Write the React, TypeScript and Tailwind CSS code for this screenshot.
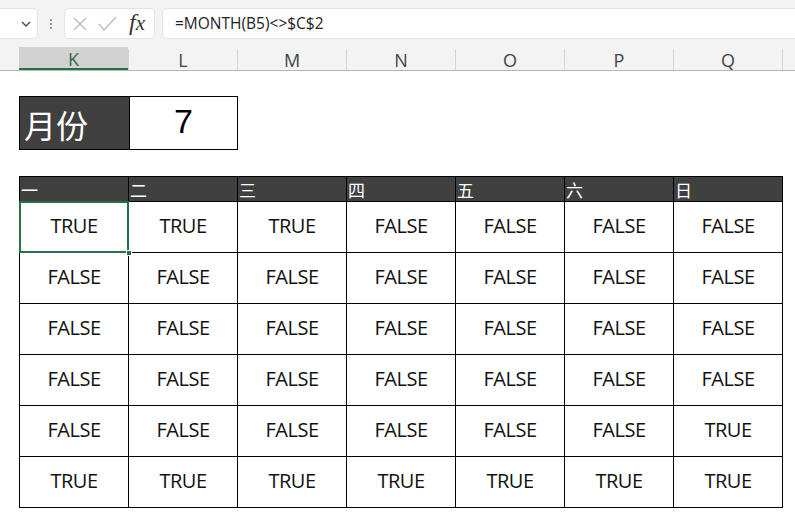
import React from 'react';

const cols = ['K', 'L', 'M', 'N', 'O', 'P', 'Q'];
const days = ['一', '二', '三', '四', '五', '六', '日'];

// true = TRUE, false = FALSE
const rows: boolean[][] = [
  [true, true, true, false, false, false, false],
  [false, false, false, false, false, false, false],
  [false, false, false, false, false, false, false],
  [false, false, false, false, false, false, false],
  [false, false, false, false, false, false, true],
  [true, true, true, true, true, true, true],
];

export default function App() {
  return (
    <div className="w-[795px] h-[518px] bg-white overflow-hidden" style={{ fontFamily: '"Open Sans", "Noto Sans", sans-serif' }}>
      {/* Formula bar */}
      <div className="bg-[#f3f3f3] h-[47px] flex items-start pt-[8px]">
        <div className="w-[38px] h-[31px] bg-white border border-[#e3e3e3] rounded-r-[5px] border-l-0 flex items-center justify-end pr-[6px]">
          <svg width="10" height="6" viewBox="0 0 10 6" fill="none" stroke="#444" strokeWidth="1.3">
            <path d="M1 1l4 4 4-4" />
          </svg>
        </div>
        <div className="w-[26px] h-[31px] flex flex-col items-center justify-center gap-[2px]">
          <span className="w-[2px] h-[2px] bg-[#999]" />
          <span className="w-[2px] h-[2px] bg-[#999]" />
          <span className="w-[2px] h-[2px] bg-[#999]" />
        </div>
        <div className="w-[91px] h-[31px] bg-white border border-[#e3e3e3] rounded-[5px] flex items-center pl-[8px]">
          <svg width="14" height="14" viewBox="0 0 14 14" stroke="#b8b8b8" strokeWidth="1.2" fill="none">
            <path d="M1 1l12 12M13 1L1 13" />
          </svg>
          <svg className="ml-[11px]" width="19" height="15" viewBox="0 0 19 15" stroke="#b8b8b8" strokeWidth="1.2" fill="none">
            <path d="M1 8l5 6L18 1" />
          </svg>
          <span className="ml-[12px] text-[24px] italic leading-none text-[#333] pb-[3px]" style={{ fontFamily: '"Liberation Serif", serif' }}>
            <span>f</span><span className="text-[21px]">x</span>
          </span>
        </div>
        <div className="ml-[7px] flex-1 h-[31px] bg-white border border-[#e3e3e3] border-r-0 rounded-l-[5px] flex items-center pl-[12px] text-[15.5px] text-[#222]" style={{ fontFamily: '"Open Sans", sans-serif' }}>
          =MONTH(B5)&lt;&gt;$C$2
        </div>
      </div>

      {/* Column headers */}
      <div className="flex h-[24px] bg-[#f3f3f3] border-b border-[#b5b5b5]">
        <div className="w-[19px]" />
        {cols.map((c, i) => (
          <div
            key={c}
            className={
              i === 0
                ? 'w-[109px] bg-[#d2d2d2] border-b-2 border-[#217346] flex items-center justify-center pt-[3px] text-[18px] text-[#2f6e4b]'
                : 'w-[109px] border-l border-[#d4d4d4] mt-[2px] flex items-center justify-center pt-[1px] text-[18px] text-[#444]'
            }
          >
            {c}
          </div>
        ))}
        <div className="border-l border-[#d4d4d4] mt-[2px]" />
      </div>

      {/* Sheet */}
      <div className="pl-[19px] pt-[25px]">
        <div className="flex h-[54px] w-[219px] border border-black">
          <div className="w-[109px] bg-[#404040] text-white text-[32px] flex items-center pl-[4px] pt-[2px] leading-none" style={{ fontFamily: '"Noto Sans CJK SC", sans-serif' }}>
            月份
          </div>
          <div className="flex-1 border-l border-black flex items-center justify-center text-[34px] text-black pb-[4px]" style={{ fontFamily: '"Liberation Sans", sans-serif' }}>
            7
          </div>
        </div>

        <table className="mt-[26px] border-collapse" style={{ fontFamily: '"Open Sans", sans-serif' }}>
          <thead>
            <tr>
              {days.map(d => (
                <th
                  key={d}
                  className="w-[109px] h-[25px] p-0 bg-[#404040] border border-black text-left align-bottom pl-[1px] text-[17px] font-normal text-white leading-[22px]"
                  style={{ fontFamily: '"Noto Sans CJK SC", sans-serif' }}
                >
                  {d}
                </th>
              ))}
            </tr>
          </thead>
          <tbody>
            {rows.map((r, ri) => (
              <tr key={ri}>
                {r.map((v, ci) => (
                  <td
                    key={ci}
                    className={
                      ri === 0 && ci === 0
                        ? 'relative w-[109px] h-[51px] p-0 pb-[2px] border border-black text-center text-[20px] tracking-[-0.5px] text-[#111]'
                        : 'w-[109px] h-[51px] p-0 pb-[2px] border border-black text-center text-[20px] tracking-[-0.5px] text-[#111]'
                    }
                  >
                    {ri === 0 && ci === 0 && (
                      <>
                        <span className="absolute inset-[-1px] border-2 border-[#217346] pointer-events-none" />
                        <span className="absolute right-[-4px] bottom-[-4px] w-[6px] h-[6px] bg-[#217346] border border-white" />
                      </>
                    )}
                    {v ? 'TRUE' : 'FALSE'}
                  </td>
                ))}
              </tr>
            ))}
          </tbody>
        </table>
      </div>
    </div>
  );
}
